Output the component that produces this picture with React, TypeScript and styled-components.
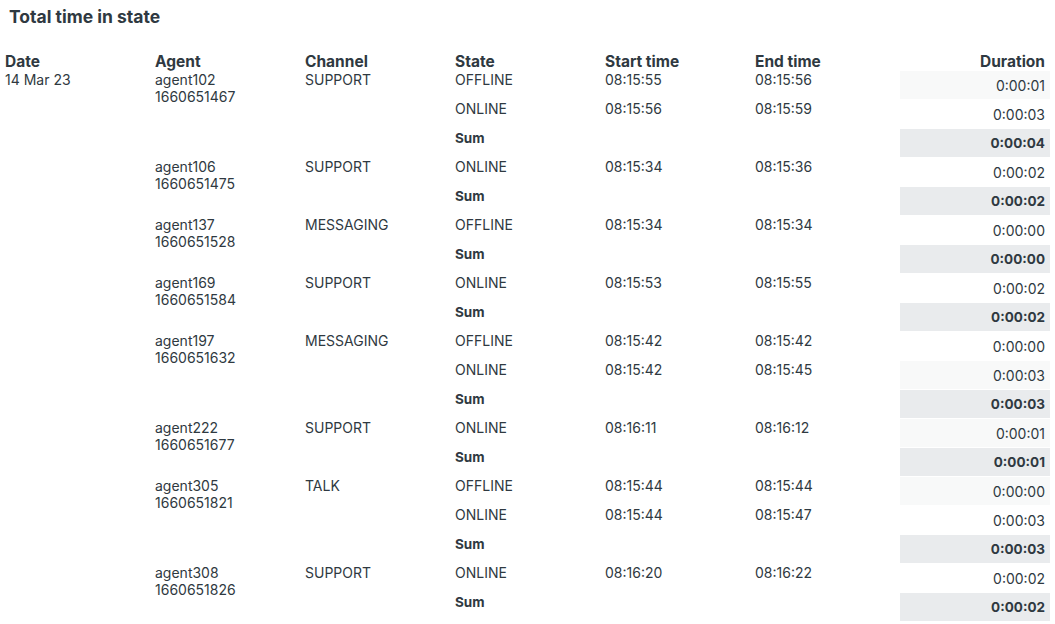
import React from "react";
import styled, { createGlobalStyle } from "styled-components";

const Global = createGlobalStyle`
  *, *::before, *::after { box-sizing: border-box; }
  html, body { margin: 0; padding: 0; background: #fff; }
  body { font-family: Inter, "Noto Sans", "Liberation Sans", sans-serif; color: #2f3941; }
`;

const Page = styled.div`
  padding: 6px 0 0 0;
`;

const Title = styled.h2`
  margin: 0 0 25px 9px;
  font-size: 17.5px;
  line-height: 21px;
  font-weight: 700;
`;

const Table = styled.table`
  width: 1050px;
  table-layout: fixed;
  border-collapse: separate;
  border-spacing: 0;
  font-size: 14px;
`;

const Col = styled.col`
  width: 150px;
`;

const Th = styled.th<{ $right?: boolean }>`
  padding: 0 5px;
  text-align: ${(p) => (p.$right ? "right" : "left")};
  font-size: 15.5px;
  font-weight: 700;
  line-height: 19px;
  vertical-align: bottom;
`;

const Td = styled.td<{ $bold?: boolean }>`
  padding: 0 5px;
  height: 29px;
  vertical-align: top;
  line-height: 17px;
  font-weight: ${(p) => (p.$bold ? 700 : 400)};
  font-size: ${(p) => (p.$bold ? "13.5px" : "14px")};
  white-space: nowrap;
`;

const SumLabel = styled.div`
  padding-top: 1px;
`;

const Dur = styled.td<{ $tone: "none" | "light" | "sum" }>`
  padding: 0 5px;
  height: 29px;
  text-align: right;
  vertical-align: middle;
  border-bottom: 1px solid #fff;
  font-size: ${(p) => (p.$tone === "sum" ? "13.5px" : "14px")};
  font-weight: ${(p) => (p.$tone === "sum" ? 700 : 400)};
  background: ${(p) =>
    p.$tone === "sum" ? "#e9ebed" : p.$tone === "light" ? "#f8f9f9" : "transparent"};
`;

const Cell = styled.td`
  padding: 0 5px;
  vertical-align: top;
  line-height: 17px;
  font-size: 14px;
`;

type Entry = { state: string; start: string; end: string; dur: string; light?: boolean };
type Group = { agent: string; id: string; channel: string; entries: Entry[]; sum: string };

const groups: Group[] = [
  {
    agent: "agent102", id: "1660651467", channel: "SUPPORT", sum: "0:00:04",
    entries: [
      { state: "OFFLINE", start: "08:15:55", end: "08:15:56", dur: "0:00:01", light: true },
      { state: "ONLINE", start: "08:15:56", end: "08:15:59", dur: "0:00:03" },
    ],
  },
  {
    agent: "agent106", id: "1660651475", channel: "SUPPORT", sum: "0:00:02",
    entries: [{ state: "ONLINE", start: "08:15:34", end: "08:15:36", dur: "0:00:02" }],
  },
  {
    agent: "agent137", id: "1660651528", channel: "MESSAGING", sum: "0:00:00",
    entries: [{ state: "OFFLINE", start: "08:15:34", end: "08:15:34", dur: "0:00:00" }],
  },
  {
    agent: "agent169", id: "1660651584", channel: "SUPPORT", sum: "0:00:02",
    entries: [{ state: "ONLINE", start: "08:15:53", end: "08:15:55", dur: "0:00:02" }],
  },
  {
    agent: "agent197", id: "1660651632", channel: "MESSAGING", sum: "0:00:03",
    entries: [
      { state: "OFFLINE", start: "08:15:42", end: "08:15:42", dur: "0:00:00" },
      { state: "ONLINE", start: "08:15:42", end: "08:15:45", dur: "0:00:03", light: true },
    ],
  },
  {
    agent: "agent222", id: "1660651677", channel: "SUPPORT", sum: "0:00:01",
    entries: [{ state: "ONLINE", start: "08:16:11", end: "08:16:12", dur: "0:00:01", light: true }],
  },
  {
    agent: "agent305", id: "1660651821", channel: "TALK", sum: "0:00:03",
    entries: [
      { state: "OFFLINE", start: "08:15:44", end: "08:15:44", dur: "0:00:00", light: true },
      { state: "ONLINE", start: "08:15:44", end: "08:15:47", dur: "0:00:03" },
    ],
  },
  {
    agent: "agent308", id: "1660651826", channel: "SUPPORT", sum: "0:00:02",
    entries: [{ state: "ONLINE", start: "08:16:20", end: "08:16:22", dur: "0:00:02" }],
  },
];

const totalRows = groups.reduce((n, g) => n + g.entries.length + 1, 0);

export default function App() {
  return (
    <Page>
      <Global />
      <Title>Total time in state</Title>
      <Table>
        <colgroup>
          {Array.from({ length: 7 }).map((_, i) => (
            <Col key={i} />
          ))}
        </colgroup>
        <thead>
          <tr>
            <Th>Date</Th>
            <Th>Agent</Th>
            <Th>Channel</Th>
            <Th>State</Th>
            <Th>Start time</Th>
            <Th>End time</Th>
            <Th $right>Duration</Th>
          </tr>
        </thead>
        <tbody>
          {groups.map((g, gi) => (
            <React.Fragment key={g.agent}>
              {g.entries.map((e, ei) => (
                <tr key={ei}>
                  {gi === 0 && ei === 0 && <Cell rowSpan={totalRows}>14 Mar 23</Cell>}
                  {ei === 0 && (
                    <Cell rowSpan={g.entries.length + 1}>
                      {g.agent}
                      <br />
                      {g.id}
                    </Cell>
                  )}
                  {ei === 0 && <Cell rowSpan={g.entries.length + 1}>{g.channel}</Cell>}
                  <Td>{e.state}</Td>
                  <Td>{e.start}</Td>
                  <Td>{e.end}</Td>
                  <Dur $tone={e.light ? "light" : "none"}>{e.dur}</Dur>
                </tr>
              ))}
              <tr>
                <Td $bold>
                  <SumLabel>Sum</SumLabel>
                </Td>
                <Td />
                <Td />
                <Dur $tone="sum">{g.sum}</Dur>
              </tr>
            </React.Fragment>
          ))}
        </tbody>
      </Table>
    </Page>
  );
}
